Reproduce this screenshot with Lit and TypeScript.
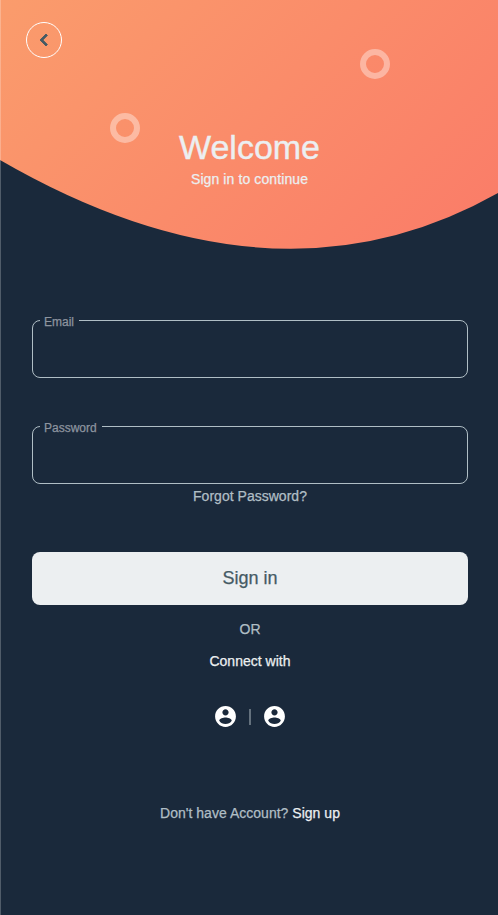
import { LitElement, html, css } from "lit";
import { customElement, property } from "lit/decorators.js";

@customElement("outlined-field")
class OutlinedField extends LitElement {
  @property() label = "";
  @property() type = "text";

  static styles = css`
    :host { display: block; text-align: left; }
    .box {
      box-sizing: border-box;
      height: 64px;
      margin: 0;
      padding: 0 12px;
      min-width: 0;
      border: 1px solid #b0bec5;
      border-radius: 8px;
    }
    .label {
      margin-left: -5px;
      padding: 0 5px 0 4px;
      height: 13px;
      font-size: 12px;
      line-height: 17px;
      letter-spacing: 0;
      color: #8d949f;
    }
    .input {
      width: 100%;
      height: 40px;
      padding: 0;
      border: 0;
      outline: 0;
      background: transparent;
      color: #eceff1;
      font: inherit;
    }
  `;

  render() {
    return html`<fieldset class="box">
      <legend class="label">${this.label}</legend>
      <input class="input" type=${this.type} aria-label=${this.label} />
    </fieldset>`;
  }
}

@customElement("account-icon")
class AccountIcon extends LitElement {
  static styles = css`
    :host { display: block; width: 25px; height: 25px; }
    .icon { display: block; width: 25px; height: 25px; fill: #fff; }
  `;

  render() {
    return html`<svg class="icon" viewBox="0 0 24 24">
      <path d="M12 2C6.48 2 2 6.48 2 12s4.48 10 10 10 10-4.48 10-10S17.52 2 12 2zm0 3c1.66 0 3 1.34 3 3s-1.34 3-3 3-3-1.34-3-3 1.34-3 3-3zm0 14.2c-2.5 0-4.71-1.28-6-3.22.03-1.99 4-3.08 6-3.08 1.99 0 5.97 1.09 6 3.08-1.29 1.94-3.5 3.22-6 3.22z" />
    </svg>`;
  }
}

@customElement("app-root")
class AppRoot extends LitElement {
  static styles = css`
    :host {
      display: block;
      position: relative;
      box-sizing: border-box;
      height: 915px;
      overflow: hidden;
      background: #1a293b;
      color: #b0bec5;
      font-family: "Liberation Sans", Arial, sans-serif;
      font-size: 14px;
      line-height: 16px;
      letter-spacing: 0.02px;
      text-align: center;
      -webkit-text-stroke: 0.25px currentColor;
    }
    :host::after {
      content: "";
      position: absolute;
      inset: 0 auto 0 0;
      width: 1px;
      background: rgba(255, 255, 255, 0.24);
    }
    .hero { position: relative; height: 250px; }
    .wave, .ring, .back { position: absolute; }
    .wave { inset: 0; width: 498px; height: 250px; }
    .ring {
      box-sizing: border-box;
      width: 30px;
      height: 30px;
      border: 6px solid rgba(255, 255, 255, 0.38);
      border-radius: 50%;
    }
    .ring.left { left: 110px; top: 113px; }
    .ring.right { left: 360px; top: 49px; }
    .back {
      left: 26px;
      top: 22px;
      box-sizing: border-box;
      width: 36px;
      height: 36px;
      padding: 5px;
      border: 1px solid #fff;
      border-radius: 50%;
      background: none;
    }
    .chevron { display: block; width: 24px; height: 24px; fill: #455a64; stroke: #455a64; stroke-width: 0.9; }
    .heading { position: relative; padding: 128px 0 0 1px; color: #eceff1; letter-spacing: 0.1px; }
    .title { margin: 0 0 4px; font-size: 34px; line-height: 39px; font-weight: 400; letter-spacing: 0; -webkit-text-stroke-width: 0.4px; }
    .form { display: flex; flex-direction: column; padding: 64px 30px 0 32px; }
    .password { margin-top: 42px; }
    .forgot { margin-top: 4px; }
    .submit {
      height: 53px;
      margin-top: 48px;
      padding: 0;
      border: 0;
      border-radius: 8px;
      background: #eceff1;
      color: #455a64;
      font: 18px/53px "Liberation Sans", Arial, sans-serif;
      letter-spacing: 0;
    }
    .or { margin-top: 16px; }
    .connect { margin-top: 16px; color: #eceff1; }
    .social { display: flex; justify-content: center; align-items: center; gap: 11px; margin-top: 35px; }
    .divider { width: 2px; height: 16px; background: #64717d; }
    .signup { margin-top: 76px; }
    .link { color: #eceff1; }
  `;

  render() {
    return html`
      <header class="hero">
        <svg class="wave" viewBox="0 0 498 250">
          <defs>
            <linearGradient id="warm" gradientUnits="userSpaceOnUse" x1="62" y1="-62" x2="436" y2="312">
              <stop offset="0" stop-color="#fa9c6c" />
              <stop offset="1" stop-color="#fa7b68" />
            </linearGradient>
          </defs>
          <path fill="url(#warm)" d="M0 0H498V193Q275 319 0 160Z" />
        </svg>
        <span class="ring left"></span>
        <span class="ring right"></span>
        <button class="back" aria-label="Back">
          <svg class="chevron" viewBox="0 0 24 24">
            <path d="M15.41 7.41L14 6l-6 6 6 6 1.41-1.41L10.83 12z" />
          </svg>
        </button>
        <div class="heading">
          <h1 class="title">Welcome</h1>
          <div>Sign in to continue</div>
        </div>
      </header>
      <main class="form">
        <outlined-field label="Email"></outlined-field>
        <outlined-field class="password" label="Password" type="password"></outlined-field>
        <div class="forgot">Forgot Password?</div>
        <button class="submit">Sign in</button>
        <div class="or">OR</div>
        <div class="connect">Connect with</div>
        <div class="social">
          <account-icon></account-icon>
          <span class="divider"></span>
          <account-icon></account-icon>
        </div>
        <div class="signup">Don't have Account? <span class="link">Sign up</span></div>
      </main>
    `;
  }
}
